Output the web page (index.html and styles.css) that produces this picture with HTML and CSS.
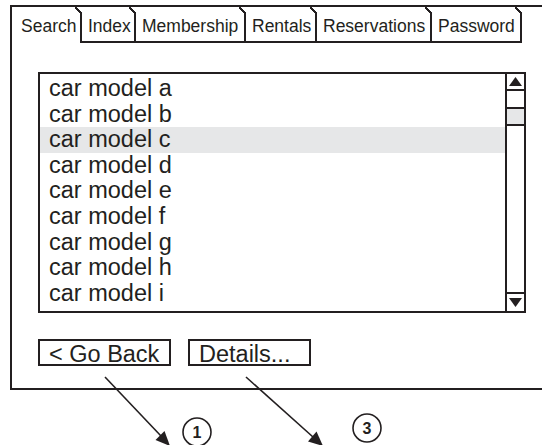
FILE: index.html
```html
<!DOCTYPE html>
<html>
<head>
<meta charset="utf-8">
<link rel="stylesheet" href="styles.css">
</head>
<body>
<div class="page">
  <div class="panel">
    <div class="tabs">
      <div class="tab active t-search">Search</div>
      <div class="tab t-index">Index</div>
      <div class="tab t-member">Membership</div>
      <div class="tab t-rentals">Rentals</div>
      <div class="tab t-reserv">Reservations</div>
      <div class="tab t-pass">Password</div>
      <div class="tab-fill"></div>
    </div>
    <div class="content">
      <div class="listbox">
        <ul class="items">
          <li>car model a</li>
          <li>car model b</li>
          <li class="selected">car model c</li>
          <li>car model d</li>
          <li>car model e</li>
          <li>car model f</li>
          <li>car model g</li>
          <li>car model h</li>
          <li>car model i</li>
        </ul>
        <div class="scrollbar">
          <div class="sb-btn sb-up"><svg width="13" height="9" viewBox="0 0 13 9"><polygon points="6.5,0 13,9 0,9" fill="#231f20"/></svg></div>
          <div class="sb-gap"></div>
          <div class="sb-thumb"></div>
          <div class="sb-track"></div>
          <div class="sb-btn sb-down"><svg width="13" height="9" viewBox="0 0 13 9"><polygon points="0,0 13,0 6.5,9" fill="#231f20"/></svg></div>
        </div>
      </div>
      <div class="buttons">
        <div class="btn btn-back">&lt; Go Back</div>
        <div class="btn btn-details">Details...</div>
      </div>
    </div>
  </div>
  <svg class="annotations" width="542" height="445" viewBox="0 0 542 445">
    <g stroke="#231f20" stroke-width="1.6" fill="none">
      <line x1="105" y1="372" x2="161" y2="431"/>
      <line x1="246" y1="372" x2="313" y2="432"/>
      <circle cx="197" cy="427" r="14"/>
      <circle cx="367" cy="423" r="14"/>
    </g>
    <g fill="#231f20">
      <polygon points="170,441 155.5,435 164.5,426"/>
      <polygon points="323,441 308,436.5 316.5,426.5"/>
    </g>
    <text x="197" y="433" class="num" text-anchor="middle">1</text>
    <text x="367" y="429" class="num" text-anchor="middle">3</text>
  </svg>
</div>
</body>
</html>
```

FILE: styles.css
```css
html, body {
  margin: 0;
  padding: 0;
  overflow: hidden;
  background: #ffffff;
}

body {
  font-family: "Liberation Sans", Arial, sans-serif;
  color: #231f20;
}

.page {
  position: relative;
  width: 542px;
  height: 445px;
}

.panel {
  margin: 5px 0 0 10px;
  border-top: 2px solid #231f20;
  border-left: 2px solid #231f20;
  border-bottom: 2px solid #231f20;
}

.tabs {
  display: flex;
  height: 36px;
}

.tab {
  box-sizing: border-box;
  height: 36px;
  padding: 4px 0 0 6px;
  font-size: 17.5px;
  line-height: 30px;
  white-space: nowrap;
  border-bottom: 2px solid #231f20;
  background-image:
    linear-gradient(#231f20, #231f20),
    linear-gradient(to top right, transparent calc(50% - 1px), #231f20 calc(50% - 1px), #231f20 calc(50% + 1px), transparent calc(50% + 1px));
  background-repeat: no-repeat, no-repeat;
  background-position: right 0 top 6px, right 0 top 0;
  background-size: 2px 100%, 7px 7px;
}

.tab.active {
  border-bottom: none;
  padding-left: 9px;
}

.t-search { width: 70px; }
.t-index { width: 54px; }
.t-member { width: 110px; }
.t-rentals { width: 71px; }
.t-reserv { width: 115px; }
.t-pass { width: 90px; }

.tab-fill {
  flex: 1;
}

.content {
  padding: 29px 0 22px 26px;
}

.listbox {
  box-sizing: border-box;
  width: 488px;
  height: 241px;
  border: 2px solid #231f20;
  display: flex;
}

.items {
  flex: 1;
  margin: 0;
  padding: 2px 0 0 0;
  list-style: none;
  font-size: 23.5px;
  line-height: 25.6px;
}

.items li {
  padding-left: 9px;
  height: 25.6px;
  white-space: nowrap;
}

.items li.selected {
  background: #e6e7e8;
}

.scrollbar {
  width: 17px;
  border-left: 2px solid #231f20;
  display: flex;
  flex-direction: column;
}

.sb-btn {
  height: 15px;
  display: flex;
  align-items: center;
  justify-content: center;
}

.sb-btn svg {
  display: block;
}

.sb-up {
  border-bottom: 2px solid #231f20;
}

.sb-down {
  border-top: 2px solid #231f20;
  height: 17px;
}

.sb-gap {
  height: 16px;
}

.sb-thumb {
  height: 15px;
  background: #e6e7e8;
  border-top: 2px solid #231f20;
  border-bottom: 2px solid #231f20;
}

.sb-track {
  flex: 1;
}

.buttons {
  display: flex;
  gap: 17px;
  margin-top: 26px;
}

.btn {
  box-sizing: border-box;
  height: 27px;
  border: 2px solid #231f20;
  padding: 2px 0 0 9px;
  font-size: 23.5px;
  line-height: 23px;
  white-space: nowrap;
}

.btn-back {
  width: 133px;
}

.btn-details {
  width: 123px;
}

.annotations {
  position: absolute;
  left: 0;
  top: 0;
  pointer-events: none;
}

.num {
  font-family: "Liberation Sans", Arial, sans-serif;
  font-weight: bold;
  font-size: 16px;
  fill: #231f20;
}
```
